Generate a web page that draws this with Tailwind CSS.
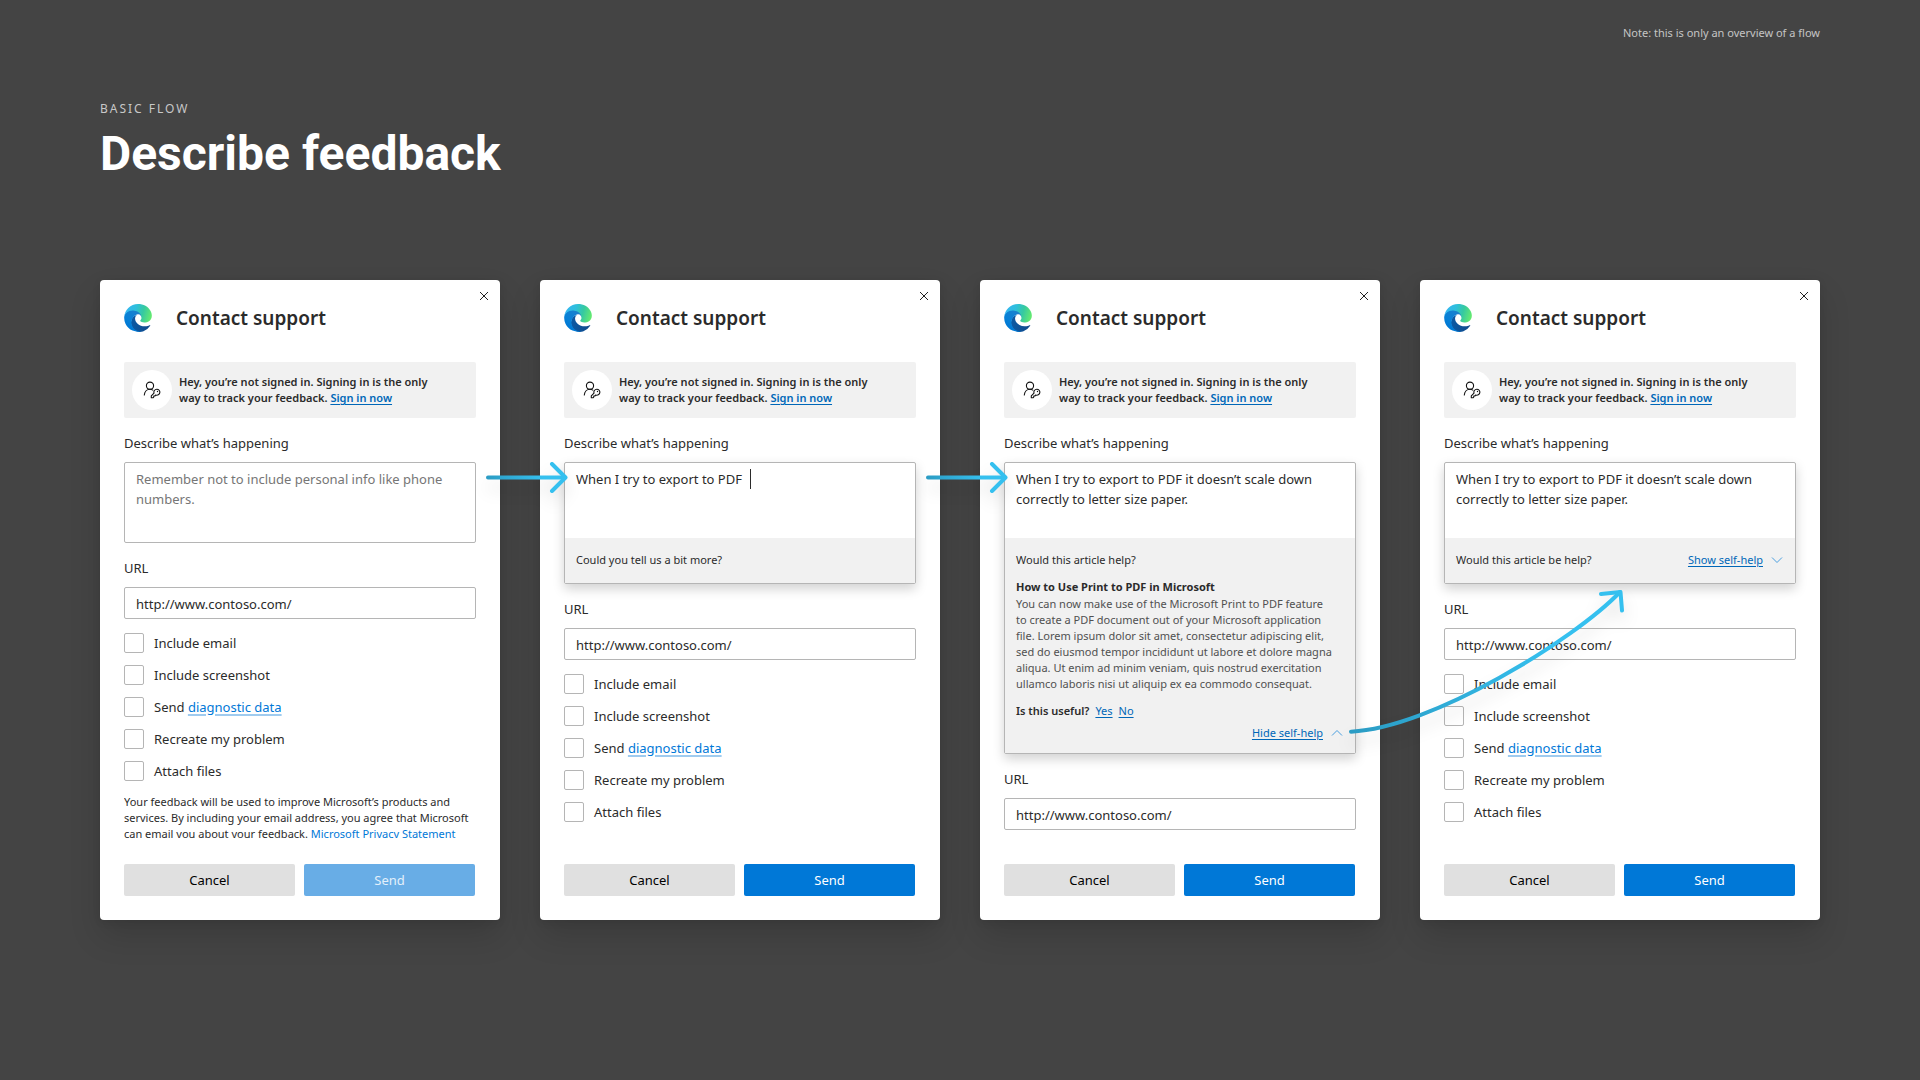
<!DOCTYPE html>
<html lang="en">
<head>
<meta charset="utf-8">
<meta name="viewport" content="width=device-width, initial-scale=1">
<title>Describe feedback</title>
<script src="https://cdn.jsdelivr.net/npm/@tailwindcss/browser@4"></script>
</head>
<body class="min-h-screen bg-[#444444] font-['Noto_Sans','Open_Sans',sans-serif] text-[13px] leading-5 text-[#2b2b2b]">

<!-- Shared icons -->
<svg class="absolute size-0" aria-hidden="true">
  <defs>
    <linearGradient id="edge-deep" gradientUnits="userSpaceOnUse" x1="63" y1="182" x2="242" y2="182"><stop offset="0" stop-color="#0c59a4"/><stop offset="1" stop-color="#114a8b"/></linearGradient>
    <linearGradient id="edge-mid" gradientUnits="userSpaceOnUse" x1="157" y1="100" x2="46" y2="221"><stop offset="0" stop-color="#1b7fc8"/><stop offset=".16" stop-color="#1580d0"/><stop offset=".67" stop-color="#0680d7"/><stop offset="1" stop-color="#0078d4"/></linearGradient>
    <linearGradient id="edge-top" gradientUnits="userSpaceOnUse" x1="10" y1="60" x2="250" y2="130"><stop offset="0" stop-color="#35b6f1"/><stop offset=".35" stop-color="#2ebfdc"/><stop offset=".65" stop-color="#36c9a0"/><stop offset="1" stop-color="#66eb6e"/></linearGradient>
    <linearGradient id="arrow-line" gradientUnits="userSpaceOnUse" x1="4" y1="0" x2="60" y2="0"><stop offset="0" stop-color="#2b9cc4"/><stop offset="1" stop-color="#35c0ef"/></linearGradient>
    <linearGradient id="curve-line" gradientUnits="userSpaceOnUse" x1="10" y1="150" x2="210" y2="60"><stop offset="0" stop-color="#2b9cc4"/><stop offset="1" stop-color="#35c0ef"/></linearGradient>
  </defs>
  <symbol id="edge" viewBox="0 0 256 259">
    <path fill="url(#edge-deep)" d="M235.68 195.46a93.73 93.73 0 0 1-10.54 4.71 101.87 101.87 0 0 1-35.9 6.46c-47.32 0-88.54-32.55-88.54-74.32A31.48 31.48 0 0 1 117.13 105c-42.8 1.8-53.8 46.4-53.8 72.53 0 73.88 68.09 81.37 82.76 81.37 7.91 0 19.84-2.3 27-4.56l1.31-.44a128.34 128.34 0 0 0 66.6-52.8 4 4 0 0 0-5.32-5.64z"/>
    <path fill="url(#edge-mid)" d="M105.73 241.42A79.2 79.2 0 0 1 83 220.08a80.72 80.72 0 0 1 29.5-120.7c3.12-1.47 8.45-4.13 15.54-4a32.35 32.35 0 0 1 25.69 13 31.88 31.88 0 0 1 6.36 18.66c0-.21 24.46-79.6-80-79.6-43.9 0-80 41.66-80 78.21a130.15 130.15 0 0 0 12.11 56 128 128 0 0 0 156.38 67.11 75.55 75.55 0 0 1-62.78-7.29z"/>
    <path fill="url(#edge-top)" d="M152.33 148.86c-.81 1.05-3.3 2.5-3.3 5.66 0 2.61 1.7 5.12 4.72 7.23 14.38 10 41.49 8.68 41.56 8.68a59.56 59.56 0 0 0 30.27-8.35 61.38 61.38 0 0 0 30.43-52.88c.26-22.41-8-37.31-11.34-43.91C223.46 23.84 177.72 0 128 0A128 128 0 0 0 0 126.2c.48-36.54 36.8-66.05 80-66.05 3.5 0 23.46.34 42 10.07 16.34 8.58 24.9 18.94 30.85 29.21 6.18 10.67 7.28 24.15 7.28 29.52s-2.74 13.33-7.8 19.91z"/>
  </symbol>
  <symbol id="person-key" viewBox="0 0 18 18">
    <g fill="none" stroke="#111" stroke-width="1.1" stroke-linecap="round" stroke-linejoin="round">
      <circle cx="7" cy="4.7" r="3.6"/>
      <path d="M1.3 14c.3-3.2 2.600-5.700 5.700-5.700 1.100 0 2 .3 2.800.8"/>
      <path d="M13.800 8.200a3 3 0 1 1-1 5.800l-1 1h-1.100v1.100l-.7.7H8.300v-1.900l2.700-2.700a3 3 0 0 1 2.800-4z"/>
    </g>
    <circle cx="14.5" cy="10.5" r=".7" fill="#111"/>
  </symbol>
  <symbol id="close" viewBox="0 0 10 10"><path d="M1 1l8 8M9 1l-8 8" fill="none" stroke="#222" stroke-width="1"/></symbol>
  <symbol id="chevron-up" viewBox="0 0 12 8"><path d="M1 6.500l5-5 5 5" fill="none" stroke="#4a9fe0" stroke-width="1"/></symbol>
  <symbol id="chevron-down" viewBox="0 0 12 8"><path d="M1 1.500l5 5 5-5" fill="none" stroke="#4a9fe0" stroke-width="1"/></symbol>
  <symbol id="arrow" viewBox="0 0 90 36"><g fill="none" stroke-width="4" stroke-linecap="round" stroke-linejoin="round"><path d="M5 17.500L82 17.600" stroke="url(#arrow-line)"/><path d="M69 4l13.500 13.500L69 31" stroke="#35c0ef"/></g></symbol>
</svg>

<header class="px-[100px] pt-[25px]">
  <p class="text-right text-[11px] leading-4 text-[#c4c4c4]">Note: this is only an overview of a flow</p>
  <p class="mt-15 text-xs leading-4 tracking-[2px] text-[#c8c8c8]">BASIC FLOW</p>
  <h1 class="mt-[9px] font-[Roboto,sans-serif] text-5xl leading-14 font-bold text-white">Describe feedback</h1>
</header>

<main id="flow" class="grid grid-cols-4 gap-10 px-[100px] pt-[98px] pb-20"></main>

<script>
const privacyNote = `
  <p class="mt-[13px] h-11 overflow-hidden text-[11px] leading-4 whitespace-nowrap">Your feedback will be used to improve Microsoft’s products and<br>services. By including your email address, you agree that Microsoft<br>can email you about your feedback. <a href="#" class="text-[#0078d7]">Microsoft Privacy Statement</a></p>`;

const article = `
  <p>Would this article help?</p>
  <h3 class="mt-[11px] font-bold">How to Use Print to PDF in Microsoft</h3>
  <p class="mt-px whitespace-nowrap text-[#505050]">You can now make use of the Microsoft Print to PDF feature<br>to create a PDF document out of your Microsoft application<br>file. Lorem ipsum dolor sit amet, consectetur adipiscing elit,<br>sed do eiusmod tempor incididunt ut labore et dolore magna<br>aliqua. Ut enim ad minim veniam, quis nostrud exercitation<br>ullamco laboris nisi ut aliquip ex ea commodo consequat.</p>
  <p class="mt-[11px] flex gap-1.5"><span class="font-semibold">Is this useful?</span><a href="#" class="text-[#0067b8] underline underline-offset-2">Yes</a><a href="#" class="text-[#0067b8] underline underline-offset-2">No</a></p>
  <p class="mt-1.5 flex items-center justify-end gap-2"><a href="#" class="text-[#0067b8] underline underline-offset-2">Hide self-help</a><svg class="mr-px h-2 w-3"><use href="#chevron-up"/></svg></p>`;

const showHelp = `
  <p class="flex items-center gap-2"><span class="grow">Would this article be help?</span><a href="#" class="text-[#0067b8] underline underline-offset-2">Show self-help</a><svg class="mr-px h-2 w-3"><use href="#chevron-down"/></svg></p>`;

const straightArrow = `<svg class="pointer-events-none absolute top-[180px] -right-[73px] z-10 h-9 w-[90px] drop-shadow-[0_10px_8px_rgb(0_0_0/0.12)]" aria-hidden="true"><use href="#arrow"/></svg>`;

const curvedArrow = `
  <svg class="pointer-events-none absolute top-[300px] left-[361px] z-10 h-[170px] w-[300px] drop-shadow-[0_10px_8px_rgb(0_0_0/0.12)]" viewBox="0 0 300 170" fill="none" stroke-width="4" stroke-linecap="round" stroke-linejoin="round" aria-hidden="true">
    <path d="M10 151.700C91 148 234 59 279 12" stroke="url(#curve-line)"/>
    <path d="M260 14l19.500-2 1.500 18.500" stroke="#35c0ef"/>
  </svg>`;

const steps = [
  { text: "", arrow: straightArrow, options: true, extra: privacyNote, disabled: true },
  { text: "When I try to export to PDF", caret: true, help: "<p>Could you tell us a bit more?</p>", arrow: straightArrow, options: true },
  { text: "When I try to export to PDF it doesn’t scale down\ncorrectly to letter size paper.", help: article, arrow: curvedArrow },
  { text: "When I try to export to PDF it doesn’t scale down\ncorrectly to letter size paper.", help: showHelp, options: true },
];

const options = ["Include email", "Include screenshot", 'Send <a href="#" class="text-[#0078d7] underline decoration-[#9fcbef] decoration-2 underline-offset-2">diagnostic data</a>', "Recreate my problem", "Attach files"];

document.getElementById("flow").innerHTML = steps.map((s, n) => `
  <section class="relative flex min-h-[640px] flex-col rounded-[4px] bg-white p-6 shadow-[0_16px_32px_rgb(0_0_0/0.14),0_2px_8px_rgb(0_0_0/0.08)]">
    <button type="button" aria-label="Close" class="absolute top-[11px] right-[11px] size-[10px]"><svg class="size-[10px]"><use href="#close"/></svg></button>
    <div class="flex h-7 items-center gap-6">
      <svg class="size-7" aria-hidden="true"><use href="#edge"/></svg>
      <h2 class="text-[19px] leading-7 font-semibold">Contact support</h2>
    </div>
    <div class="mt-[30px] flex h-14 items-center gap-[7px] rounded-[2px] bg-[#f1f1f1] px-2">
      <span class="flex size-10 shrink-0 items-center justify-center rounded-full bg-white"><svg class="size-[18px]" aria-hidden="true"><use href="#person-key"/></svg></span>
      <p class="text-[11px] leading-4 font-semibold whitespace-nowrap">Hey, you’re not signed in. Signing in is the only<br>way to track your feedback. <a href="#" class="text-[#0067b8] underline underline-offset-2">Sign in now</a></p>
    </div>
    <label for="describe-${n}" class="mt-[15px] mb-[9px]">Describe what’s happening</label>
    ${s.help ? `
    <div class="relative flex flex-col rounded-[2px] border border-[#b5b5b5] bg-white shadow-[0_5px_12px_rgb(0_0_0/0.18)]">
      <textarea id="describe-${n}" class="h-[75px] resize-none px-[11px] py-1.5 outline-none">${s.text}</textarea>
      ${s.caret ? `<span class="absolute top-1.5 left-[185px] h-5 w-px bg-[#2b2b2b]"></span>` : ""}
      <div class="bg-[#f1f1f1] px-[11px] pt-[14px] text-[11px] leading-4 ${s.help === article ? "pb-3" : "pb-[15px]"}">${s.help}</div>
    </div>` : `
    <textarea id="describe-${n}" class="h-[81px] resize-none rounded-[2px] border border-[#b5b5b5] px-[11px] py-1.5 outline-none placeholder:text-[#767676]" placeholder="Remember not to include personal info like phone&#10;numbers."></textarea>`}
    <label for="url-${n}" class="mt-[15px] mb-[9px]">URL</label>
    <input id="url-${n}" type="text" value="http://www.contoso.com/" class="h-8 rounded-[2px] border border-[#b5b5b5] px-[11px] pt-0.5 outline-none">
    ${s.options ? `
    <div class="mt-[14px] flex flex-col gap-3">
      ${options.map((o, i) => `<div class="flex items-center gap-[10px]"><input type="checkbox" id="option-${n}-${i}" class="size-5 appearance-none rounded-[2px] border border-[#b5b5b5] bg-white"><label for="option-${n}-${i}">${o}</label></div>`).join("")}
    </div>` : ""}
    ${s.extra || ""}
    <div class="mt-auto mr-px flex gap-[9px]">
      <button type="button" class="h-8 flex-1 rounded-[2px] bg-[#e0e0e0] text-black">Cancel</button>
      <button type="button" ${s.disabled ? "disabled" : ""} class="h-8 flex-1 rounded-[2px] bg-[#0078d7] text-white disabled:bg-[#68ade6] disabled:text-[#e3f0fb]">Send</button>
    </div>
    ${s.arrow || ""}
  </section>`).join("");
</script>
</body>
</html>
